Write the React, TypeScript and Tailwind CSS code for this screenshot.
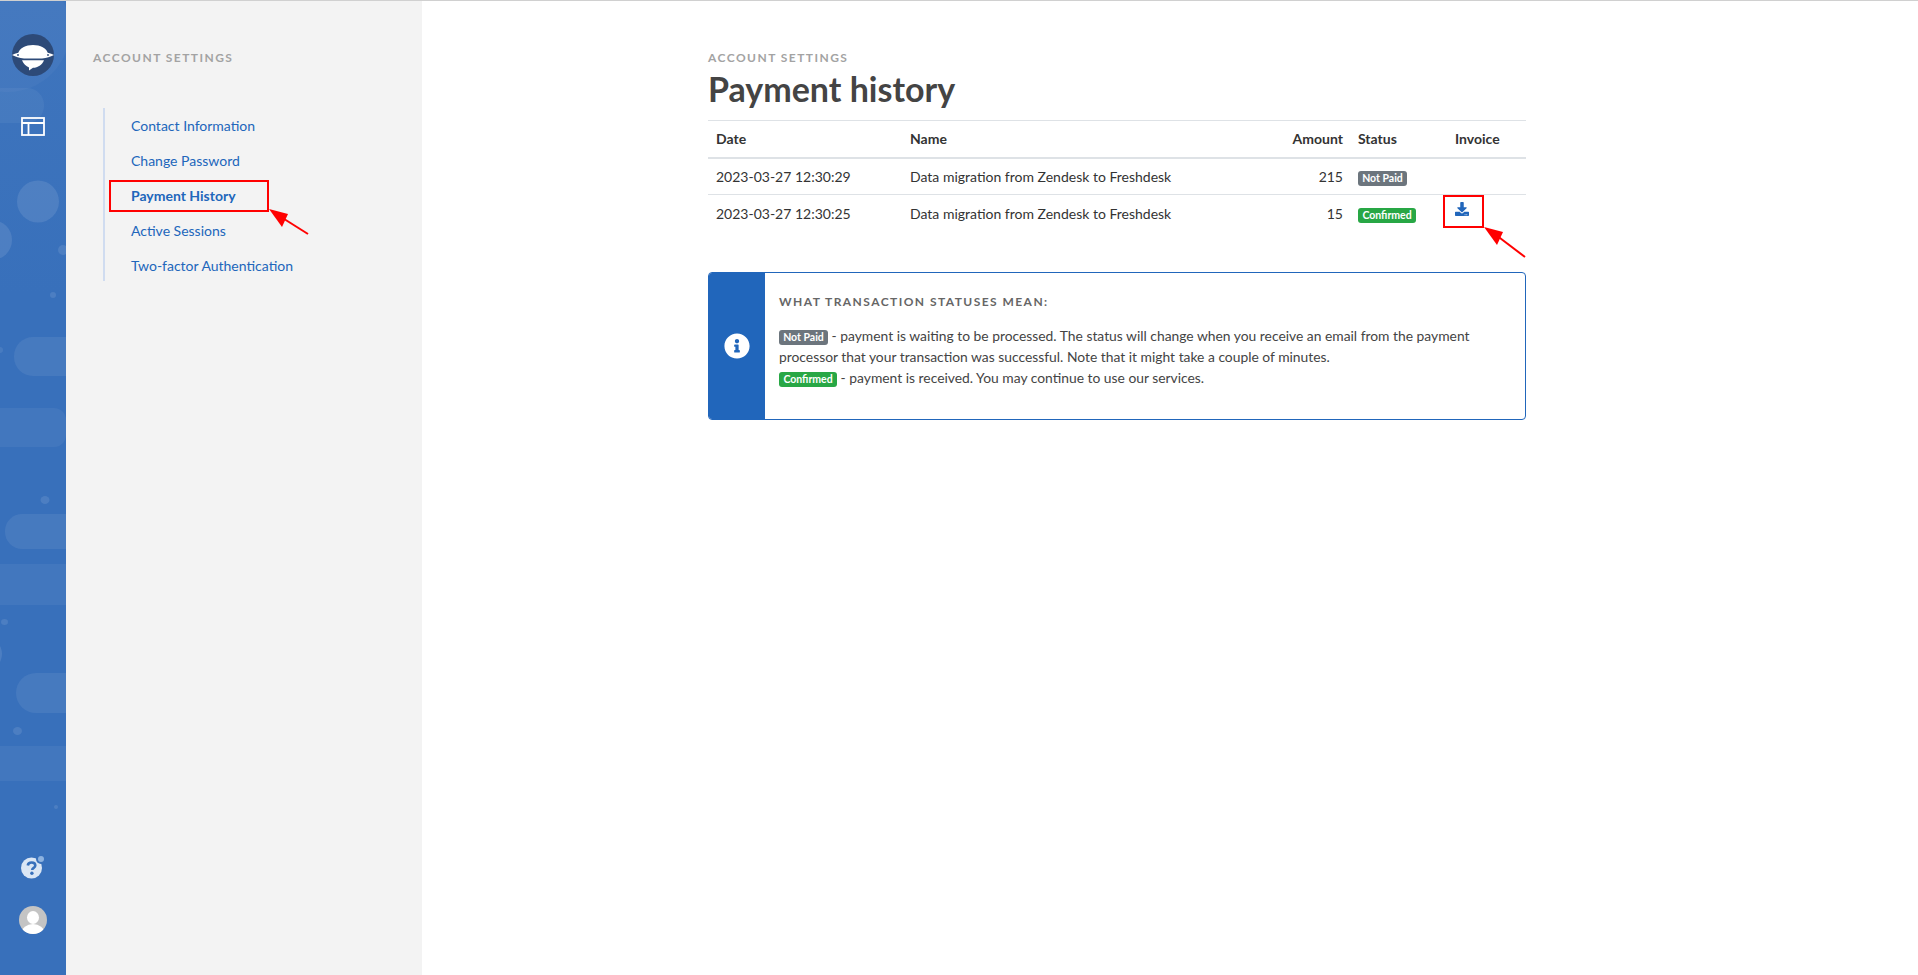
import { FaDownload, FaInfoCircle } from "react-icons/fa";

const NAV = ["Contact Information", "Change Password", "Payment History", "Active Sessions", "Two-factor Authentication"];

const ROWS = [
  { date: "2023-03-27 12:30:29", name: "Data migration from Zendesk to Freshdesk", amount: 215, paid: false },
  { date: "2023-03-27 12:30:25", name: "Data migration from Zendesk to Freshdesk", amount: 15, paid: true }
];

function Badge({ paid }: { paid: boolean }) {
  return paid ? (
    <span className="inline-block rounded-[3px] bg-[#28a745] px-[4.4px] text-[10.5px] leading-[15px] font-bold text-white">Confirmed</span>
  ) : (
    <span className="inline-block rounded-[3px] bg-[#6c757d] px-[4.2px] text-[10.5px] leading-[15px] font-bold text-white">Not Paid</span>
  );
}

function RailBackground() {
  // faint shapes behind the rail icons
  return (
    <svg className="absolute inset-0" width="66" height="974" viewBox="0 1 66 974" fill="#fff">
      <circle cx="8" cy="30" r="62" opacity="0.03" />
      <rect x="-40" y="88" width="84" height="35" rx="17" opacity="0.05" />
      <circle cx="38" cy="201.5" r="21" opacity="0.1" />
      <circle cx="-8" cy="240" r="20" opacity="0.1" />
      <circle cx="63" cy="250" r="5" opacity="0.1" />
      <circle cx="53" cy="295" r="3" opacity="0.1" />
      <circle cx="0" cy="350" r="3" opacity="0.08" />
      <rect x="14" y="337" width="90" height="39" rx="19" opacity="0.07" />
      <rect x="-30" y="408" width="96" height="39" rx="12" opacity="0.05" />
      <ellipse cx="45" cy="500" rx="4.5" ry="4" opacity="0.1" />
      <rect x="5" y="514" width="100" height="35" rx="17" opacity="0.07" />
      <rect x="0" y="564" width="66" height="41" opacity="0.05" />
      <ellipse cx="4.5" cy="622" rx="3.5" ry="3" opacity="0.1" />
      <circle cx="-15" cy="654" r="17" opacity="0.1" />
      <rect x="16" y="673" width="90" height="40" rx="20" opacity="0.07" />
      <ellipse cx="17.5" cy="731" rx="4.5" ry="4" opacity="0.1" />
      <rect x="0" y="746" width="66" height="35" opacity="0.05" />
      <circle cx="56" cy="807" r="2" opacity="0.1" />
    </svg>
  );
}

function Logo() {
  return (
    <svg width="42" height="42" viewBox="0 0 42 42">
      <circle cx="21" cy="21" r="21" fill="#2d4a78" />
      <path d="M6 20 C8 8 34 8 36 20 Z" fill="#fff" />
      <path d="M0 21 C4 19 7 18.5 10 18.3 L32 18.3 C35 18.5 38 19 42 21 C38 23 35 24 30 24.6 L12 24.6 C7 24 4 23 0 21 Z" fill="#fff" />
      <path d="M10 26.2 L32 26.2 C30 31 26 33.5 21 33.8 L17 36.5 L17 33.4 C14 32.4 11.5 29.5 10 26.2 Z" fill="#fff" />
      <circle cx="6" cy="21" r="0.9" fill="#2d4a78" />
      <circle cx="36" cy="21" r="0.9" fill="#2d4a78" />
    </svg>
  );
}

function HelpIcon() {
  return (
    <svg width="24" height="24" viewBox="0 0 24 24">
      <circle cx="10.5" cy="13" r="10.5" fill="#dbe6f4" />
      <circle cx="20" cy="4" r="5" fill="#3870bb" />
      <circle cx="20" cy="4" r="3" fill="#8db2e0" />
      <path d="M6.8 10.5 C7.2 6.5 14.3 6.5 14.3 10.5 C14.3 13 11.2 12.8 11.2 15" fill="none" stroke="#3870bb" strokeWidth="2.6" />
      <circle cx="10.9" cy="18.3" r="1.7" fill="#3870bb" />
    </svg>
  );
}

function Avatar() {
  return (
    <svg width="28" height="28" viewBox="0 0 28 28">
      <defs>
        <clipPath id="av">
          <circle cx="14" cy="14" r="14" />
        </clipPath>
      </defs>
      <circle cx="14" cy="14" r="14" fill="#c4c4c4" />
      <g clipPath="url(#av)" fill="#fff">
        <ellipse cx="14" cy="11.5" rx="6" ry="6.5" />
        <ellipse cx="14" cy="27" rx="11.5" ry="9" />
      </g>
    </svg>
  );
}

function Arrow({ className, tailX, tailY }: { className: string; tailX: number; tailY: number }) {
  return (
    <svg className={className} width={tailX + 1} height={tailY + 1} viewBox={`0 0 ${tailX + 1} ${tailY + 1}`}>
      <path d={`M${tailX} ${tailY} L12 8`} stroke="#ff0000" strokeWidth="2" fill="none" />
      <path d="M0 0 L19 5 L13 18 Z" fill="#ff0000" />
    </svg>
  );
}

export default function App() {
  return (
    <div className="flex h-[975px] flex-col overflow-hidden bg-white font-['Lato',sans-serif] text-[14px] text-[#333]">
      <div className="h-px bg-[#d0d0d0]" />
      <div className="flex min-h-0 flex-1">
        {/* Icon rail */}
        <aside className="relative flex w-[66px] shrink-0 flex-col items-center bg-gradient-to-b from-[#3f75bd] to-[#3870bb] to-[30%]">
          <RailBackground />
          <div className="relative mt-[33px]">
            <Logo />
          </div>
          <svg className="relative mt-[41px]" width="24" height="19" viewBox="0 0 24 19" fill="none" stroke="#fff" strokeWidth="1.8">
            <rect x="1" y="1" width="22" height="17" />
            <path d="M1 6 H23 M7.5 6 V18" />
          </svg>
          <div className="relative mt-auto mb-[41px] flex flex-col items-center gap-[27px]">
            <HelpIcon />
            <Avatar />
          </div>
        </aside>

        {/* Settings nav */}
        <nav className="relative w-[356px] shrink-0 bg-[#f3f3f3] pl-[27px]">
          <div className="mt-[50px] text-[12px] leading-[14px] font-bold tracking-[1.45px] text-[#a3a3a3]">ACCOUNT SETTINGS</div>
          <ul className="ml-[10px] mt-[43px] h-[173px] w-fit border-l-2 border-[#d0dcf0] pl-[26px] pr-[20px]">
            {NAV.map((item) => (
              <li
                key={item}
                className={`h-[35px] text-[14px] leading-[35px] text-[#2166bb] ${item === "Payment History" ? "font-bold" : ""}`}
              >
                {item}
              </li>
            ))}
          </ul>
          <div className="absolute left-[43px] top-[179px] h-[32px] w-[160px] border-2 border-[#ff0000]" />
          <Arrow className="absolute left-[203px] top-[208px]" tailX={39} tailY={25} />
        </nav>

        {/* Main */}
        <main className="relative flex-1 pl-[286px]">
          <div className="w-[818px]">
            <div className="mt-[50px] text-[12px] leading-[14px] font-bold tracking-[1.45px] text-[#a3a3a3]">ACCOUNT SETTINGS</div>
            <h1 className="mt-[2px] text-[34px] leading-[43px] font-bold text-[#444]">Payment history</h1>

            <table className="mt-[10px] w-full table-fixed border-collapse text-left">
              <thead>
                <tr className="h-[37px] border-y border-b-2 border-[#dee2e6]">
                  <th className="w-[194px] pl-2 font-bold">Date</th>
                  <th className="pl-2 font-bold">Name</th>
                  <th className="w-[100px] pr-[7px] text-right font-bold">Amount</th>
                  <th className="w-[97px] pl-2 font-bold">Status</th>
                  <th className="w-[79px] pl-2 font-bold">Invoice</th>
                </tr>
              </thead>
              <tbody>
                {ROWS.map((r) => (
                  <tr key={r.date} className="h-[37px] border-b border-[#dee2e6] last:border-b-0">
                    <td className="pl-2">{r.date}</td>
                    <td className="pl-2">{r.name}</td>
                    <td className="pr-[7px] text-right">{r.amount}</td>
                    <td className="pl-2">
                      <Badge paid={r.paid} />
                    </td>
                    <td className="pl-2">{r.paid && <FaDownload className="-mt-[8px] text-[14px] text-[#2166bb]" />}</td>
                  </tr>
                ))}
              </tbody>
            </table>

            <div className="mt-[40px] flex h-[148px] overflow-hidden rounded-[4px] border border-[#2166bb]">
              <div className="flex w-[56px] shrink-0 items-center justify-center bg-[#2166bb]">
                <FaInfoCircle className="text-[26px] text-white" />
              </div>
              <div className="pl-[14px] pt-[22px] text-[13.85px] leading-[21px] text-[#444]">
                <div className="text-[12px] leading-[14px] font-bold tracking-[1.45px] text-[#666]">WHAT TRANSACTION STATUSES MEAN:</div>
                <div className="mt-[16px] w-[730px]">
                  <Badge paid={false} /> - payment is waiting to be processed. The status will change when you receive an email from the payment processor that your transaction was successful. Note that it might take a couple of minutes.
                  <br />
                  <Badge paid={true} /> - payment is received. You may continue to use our services.
                </div>
              </div>
            </div>
          </div>

          <div className="absolute left-[1021px] top-[194px] h-[33px] w-[41px] border-2 border-[#ff0000]" />
          <Arrow className="absolute left-[1062px] top-[226px]" tailX={41} tailY={30} />
        </main>
      </div>
    </div>
  );
}
